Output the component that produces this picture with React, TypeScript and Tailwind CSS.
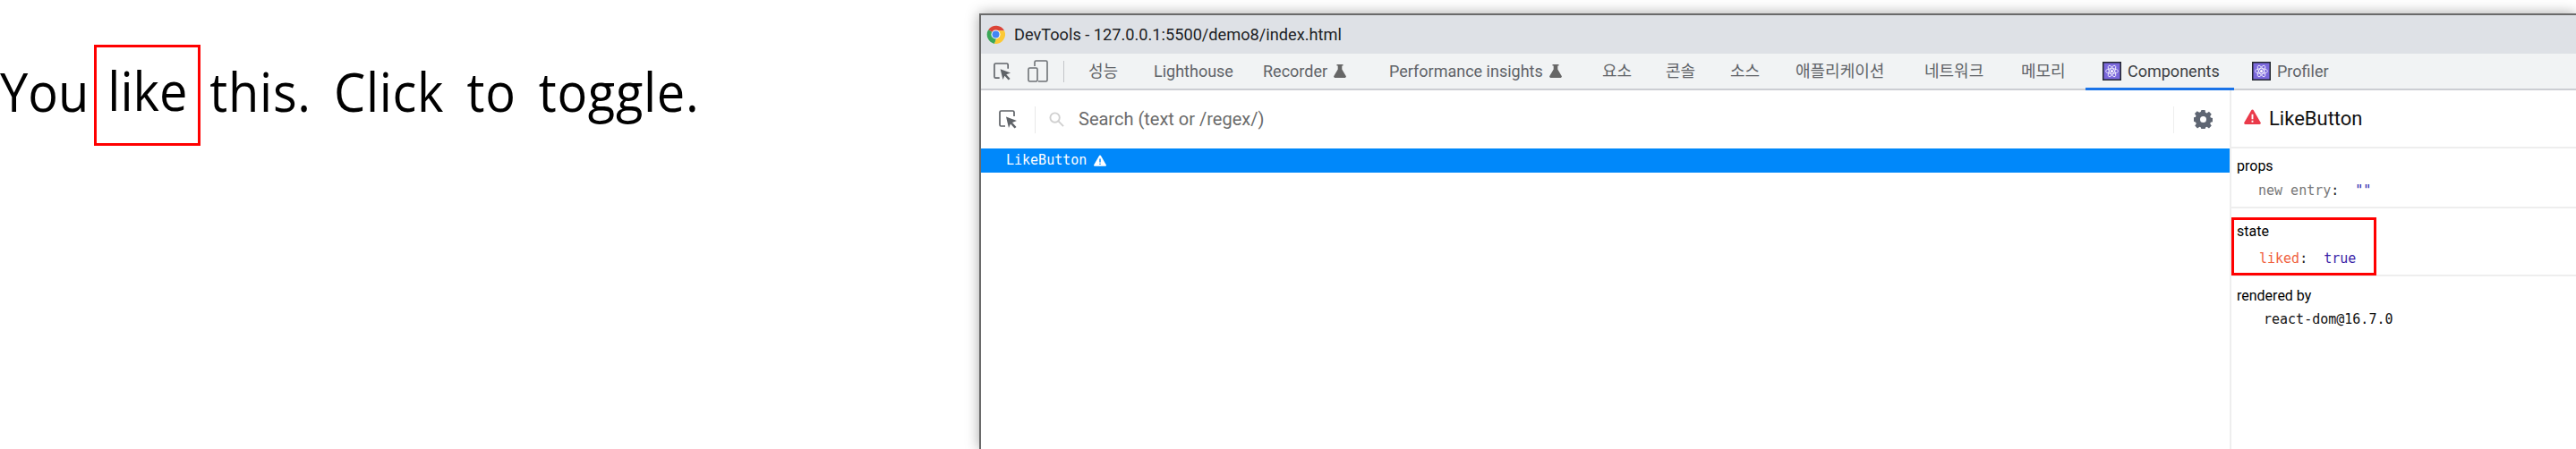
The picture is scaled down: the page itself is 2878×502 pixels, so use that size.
import { ReactNode } from "react";

const SANS = "font-['Roboto','Noto_Sans_CJK_KR',sans-serif]";
const MONO = "font-['DejaVu_Sans_Mono','Liberation_Mono',monospace]";

function InspectIcon({ className }: { className: string }) {
  return (
    <svg viewBox="0 0 21 21" className={className} fill="none">
      <path d="M7 18H2.500A1.500 1.500 0 0 1 1 16.500V2.500A1.500 1.500 0 0 1 2.500 1h13A1.500 1.500 0 0 1 17 2.500V7" stroke="#5f6368" strokeWidth="1.700" />
      <path d="M8 7.500l12 4.500-5 2 4.500 5-2 1.500-4.500-5-2 4.500z" fill="#5f6368" />
    </svg>
  );
}

function DeviceIcon() {
  return (
    <svg viewBox="0 0 23 25" className="h-[25px] w-[23px]" fill="none" stroke="#6e7276" strokeWidth="1.600">
      <path d="M8 7V2.500A1.500 1.500 0 0 1 9.500 1h11A1.500 1.500 0 0 1 22 2.500v20a1.500 1.500 0 0 1-1.500 1.500H12" />
      <rect x="1" y="9" width="10" height="15" rx="1.500" />
    </svg>
  );
}

function Flask() {
  return (
    <svg viewBox="0 0 14 15" className="h-[15px] w-[14px]" fill="#666">
      <path d="M3.500 0h7v1.500H9.300v4L14 13.500 13 15H1L0 13.500 4.700 5.500v-4H3.500z" />
    </svg>
  );
}

function ChromeLogo() {
  return (
    <svg viewBox="1 1 22 22" className="h-[21px] w-[21px] shrink-0">
      <path d="M12 12 3.300 6.500A11 11 0 0 1 22 7.500H12z" fill="#db4437" />
      <path d="M12 12 3.300 6.500A11 11 0 0 0 10.500 22.900L13 16z" fill="#3aa757" />
      <path d="M12 12V7.500h10A11 11 0 0 1 10.500 22.900L13 16z" fill="#fcc934" />
      <circle cx="12" cy="12" r="5.300" fill="#fff" />
      <circle cx="12" cy="12" r="4.200" fill="#4285f4" />
    </svg>
  );
}

function ReactBadge() {
  return (
    <svg viewBox="0 0 21 21" className="h-[21px] w-[21px] shrink-0">
      <rect width="21" height="21" fill="#23272f" />
      <rect x="1.500" y="1.500" width="18" height="18" fill="#7b68dc" />
      <g fill="none" stroke="#fff" strokeWidth="0.800">
        <ellipse cx="10.500" cy="10.500" rx="7" ry="2.800" />
        <ellipse cx="10.500" cy="10.500" rx="7" ry="2.800" transform="rotate(60 10.500 10.500)" />
        <ellipse cx="10.500" cy="10.500" rx="7" ry="2.800" transform="rotate(120 10.500 10.500)" />
      </g>
      <circle cx="10.500" cy="10.500" r="1.500" fill="#fff" />
    </svg>
  );
}

function WarnTriangle({ fill, mark, className }: { fill: string; mark: string; className: string }) {
  return (
    <svg viewBox="0 0 20 18" className={className}>
      <path d="M10 .5a1.500 1.500 0 0 1 1.300.8l8.400 14.500a1.500 1.500 0 0 1-1.300 2.200H1.600a1.500 1.500 0 0 1-1.300-2.200L8.700 1.300A1.500 1.500 0 0 1 10 .5z" fill={fill} />
      <path d="M9 6h2v6H9zM9 13.500h2v2H9z" fill={mark} />
    </svg>
  );
}

function Gear() {
  return (
    <svg viewBox="0 0 24 24" className="h-[21px] w-[21px]" fill="#5f6673">
      <path
        fillRule="evenodd"
        d="M9.700 0h4.600l.6 3.100 1.800.8 2.700-1.800 3.200 3.200-1.800 2.700.8 1.800 3.100.6v4.600l-3.100.6-.8 1.800 1.800 2.700-3.200 3.200-2.700-1.800-1.800.8-.6 3.100H9.700l-.6-3.100-1.800-.8-2.700 1.800-3.200-3.200 1.800-2.700-.8-1.800L-1 14.300V9.700l3.100-.6.8-1.800L1.100 4.600l3.200-3.200 2.700 1.800 1.800-.8zM12 8a4 4 0 1 0 0 8 4 4 0 0 0 0-8z"
      />
    </svg>
  );
}

function Tab({ className, children }: { className: string; children: ReactNode }) {
  return <div className={`flex h-full items-center gap-[7px] text-[18px] text-[#5f6368] ${className}`}>{children}</div>;
}

function Section({ title, children, className = "" }: { title: string; children: ReactNode; className?: string }) {
  return (
    <section className={className}>
      <h3 className="text-[16px] leading-[20px] text-black">{title}</h3>
      {children}
    </section>
  );
}

export default function App() {
  return (
    <div className={`flex h-[502px] w-[2878px] overflow-hidden bg-white ${SANS}`}>
      <div className="flex w-[1094px] shrink-0 items-start pt-[50px] font-['Open_Sans',sans-serif] text-[56px] leading-[80px] text-black [word-spacing:10px]">
        <span className="mt-[11px] scale-y-[1.08]">You</span>
        <span className="ml-[6px] flex h-[113px] w-[119px] justify-center border-[3px] border-[#ff0000]">
          <span className="mt-[8px] scale-y-[1.08]">like</span>
        </span>
        <span className="mt-[11px] ml-[10px] scale-y-[1.08] tracking-[0.7px] whitespace-nowrap">this. Click to toggle.</span>
      </div>

      <div className="mt-[15px] flex flex-1 flex-col border-t-2 border-l-2 border-[#6a6a6a] shadow-[0_0_14px_rgba(0,0,0,0.35)]">
        <div className="flex h-[43px] items-center gap-[10px] bg-[#dee1e6] pl-[6px] text-[18.2px] text-[#202124]">
          <ChromeLogo />
          <span>DevTools - 127.0.0.1:5500/demo8/index.html</span>
        </div>

        <div className="flex h-[41px] items-center border-b-2 border-[#ccced3] bg-[#f1f3f4] pl-[14px]">
          <InspectIcon className="h-[20px] w-[20px]" />
          <div className="ml-[18px]"><DeviceIcon /></div>
          <div className="ml-[17px] h-[24px] w-[1px] bg-[#c4c6c9]" />
          <Tab className="ml-[27px] w-[73px]">성능</Tab>
          <Tab className="w-[122px]">Lighthouse</Tab>
          <Tab className="w-[141px]">Recorder <Flask /></Tab>
          <Tab className="w-[238px]">Performance insights <Flask /></Tab>
          <Tab className="w-[71px]">요소</Tab>
          <Tab className="w-[72px]">콘솔</Tab>
          <Tab className="w-[73px]">소스</Tab>
          <Tab className="w-[144px]">애플리케이션</Tab>
          <Tab className="w-[108px]">네트워크</Tab>
          <Tab className="w-[72px]">메모리</Tab>
          <div className="-mb-[2px] flex h-[41px] w-[166px] items-center gap-[7px] border-b-[3px] border-[#1a73e8] pl-[19px] text-[18px] text-[#3c4043]">
            <ReactBadge />
            Components
          </div>
          <Tab className="ml-[20px]"><ReactBadge /> Profiler</Tab>
        </div>

        <div className="flex min-h-0 flex-1">
          <div className="flex w-[1395px] shrink-0 flex-col">
            <div className="flex h-[65px] items-center">
              <InspectIcon className="ml-[20px] h-[21px] w-[21px]" />
              <div className="ml-[19px] h-[30px] w-[1px] bg-[#e8e8e8]" />
              <svg viewBox="0 0 18 18" className="ml-[15px] h-[17px] w-[17px]" fill="none" stroke="#d0d0d0" strokeWidth="2">
                <circle cx="7" cy="7" r="5.500" />
                <path d="M11 11l6 6" />
              </svg>
              <span className="ml-[16px] pb-[2px] text-[20px] text-[#6b6b6b]">Search (text or /regex/)</span>
              <div className="ml-auto flex items-center">
                <div className="h-[30px] w-[1px] bg-[#eee]" />
                <div className="mr-[19px] ml-[22px]"><Gear /></div>
              </div>
            </div>
            <div className={`flex h-[27px] items-center bg-[#0088fa] pl-[28px] text-[15px] text-white ${MONO}`}>
              LikeButton
              <WarnTriangle fill="#fff" mark="#0088fa" className="ml-[8px] h-[13px] w-[14px]" />
            </div>
          </div>

          <div className="flex-1 border-l-2 border-[#eee]">
            <div className="flex h-[65px] items-center border-b-2 border-[#eee] pl-[14px]">
              <WarnTriangle fill="#ea3a4a" mark="#fff" className="mb-[5px] h-[17px] w-[19px]" />
              <span className="ml-[9px] text-[22px] text-[#111]">LikeButton</span>
            </div>

            <Section title="props" className="h-[67px] border-b-2 border-[#eee] pt-[10px] pl-[6px]">
              <div className={`mt-[9px] pl-[24px] text-[15px] leading-[17px] ${MONO}`}>
                <span className="text-[#777]">new entry</span>
                <span className="text-[#222]">:</span>
                <span className="ml-[18px] text-[#2a2ab0]">""</span>
              </div>
            </Section>

            <div className="h-[76px] border-b-2 border-[#eee] pt-[10px]">
              <Section title="state" className="h-[65px] w-[162px] border-[3px] border-[#ff0000] pt-[3px] pl-[3px]">
                <div className={`mt-[12px] pl-[25px] text-[15px] leading-[17px] ${MONO}`}>
                  <span className="text-[#f0623e]">liked</span>
                  <span className="text-[#222]">:</span>
                  <span className="ml-[18px] text-[#3a1fa8]">true</span>
                </div>
              </Section>
            </div>

            <Section title="rendered by" className="pt-[12px] pl-[6px]">
              <div className={`mt-[8px] pl-[30px] text-[15px] leading-[17px] text-[#111] ${MONO}`}>react-dom@16.7.0</div>
            </Section>
          </div>
        </div>
      </div>
    </div>
  );
}
